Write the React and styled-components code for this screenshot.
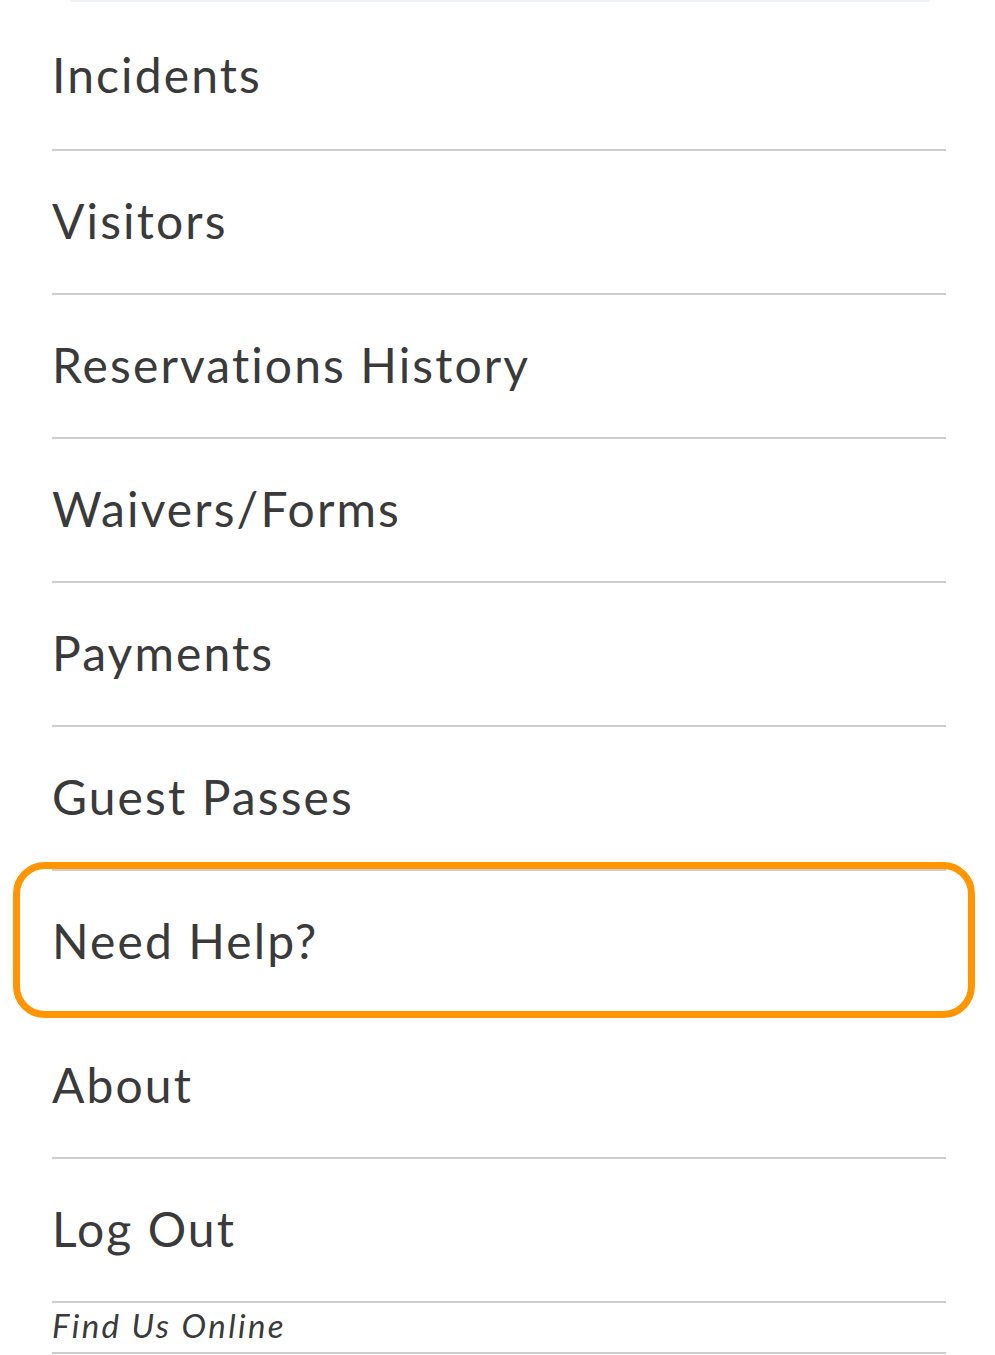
import React from "react";
import styled, { createGlobalStyle } from "styled-components";

const items = [
  "Incidents",
  "Visitors",
  "Reservations History",
  "Waivers/Forms",
  "Payments",
  "Guest Passes",
  "Need Help?",
  "About",
  "Log Out",
];

export default function App() {
  return (
    <>
      <GlobalStyle />
      <Page>
        <TopEdge />
        <Menu>
          {items.map((label, i) => (
            <Item key={label} $first={i === 0} $highlight={label === "Need Help?"}>
              {label}
            </Item>
          ))}
          <Footer>Find Us Online</Footer>
        </Menu>
      </Page>
    </>
  );
}

const textColor = "#3a3a3a";
const lineColor = "#cdcdcd";
const orange = "#ff9500";

const GlobalStyle = createGlobalStyle`
  body {
    margin: 0;
    background: #ffffff;
    font-family: Lato, "Open Sans", sans-serif;
  }
`;

const Page = styled.div`
  width: 995px;
  height: 1355px;
  overflow: hidden;
  background: #ffffff;
`;

const TopEdge = styled.div`
  height: 2px;
  margin: 0 65px 0 70px;
  background: #edf3f7;
  border-radius: 0 0 4px 4px;
`;

const Menu = styled.ul`
  list-style: none;
  margin: 0 0 0 52px;
  padding: 0;
  width: 894px;
`;

const Item = styled.li`
  position: relative;
  display: flex;
  align-items: center;
  height: ${(p) => (p.$first ? "149px" : "144px")};
  padding-bottom: 3px;
  box-sizing: border-box;
  border-bottom: 2px solid ${lineColor};
  font-size: 48px;
  color: ${textColor};
  letter-spacing: 2.1px;

  ${(p) =>
    p.$highlight &&
    `
    &::after {
      content: "";
      position: absolute;
      top: -9px;
      bottom: -5px;
      left: -39px;
      right: -29px;
      border: 7px solid ${orange};
      border-radius: 32px;
      pointer-events: none;
    }
  `}
`;

const Footer = styled.li`
  display: flex;
  align-items: center;
  height: 51px;
  padding-bottom: 6px;
  box-sizing: border-box;
  border-bottom: 2px solid ${lineColor};
  font-size: 33px;
  font-style: italic;
  color: ${textColor};
  letter-spacing: 2.4px;
`;
